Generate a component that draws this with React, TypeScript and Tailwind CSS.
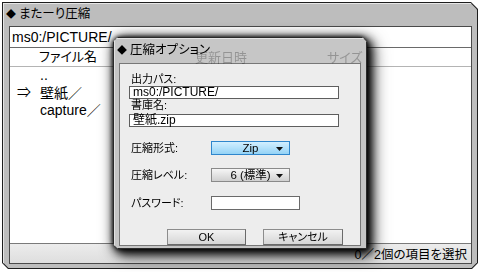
const files = ['..', '壁紙', 'capture'];

function Slash() {
  return <span className="font-['Noto_Sans_CJK_JP',sans-serif] font-medium text-black">／</span>;
}

function Arrow() {
  return (
    <svg className="absolute right-[6px] top-[5px]" width="7" height="4" viewBox="0 0 7 4">
      <polygon points="0,0 7,0 3.5,4" fill="#111" />
    </svg>
  );
}

function Dropdown({ value, active }: { value: string; active?: boolean }) {
  return (
    <div
      className={
        active
          ? 'relative h-[14px] w-[79px] border border-[#2f86cc] bg-linear-to-b from-[#d2efff] to-[#94d3f6] text-center text-[11.5px] leading-[12px]'
          : 'relative h-[14px] w-[79px] border border-[#8a8a8a] bg-linear-to-b from-[#f6f6f6] to-[#d0d0d0] text-center text-[11.5px] leading-[12px]'
      }
    >
      {value}
      <Arrow />
    </div>
  );
}

function Button({ label, width }: { label: string; width: string }) {
  return (
    <div
      className={`h-[16px] ${width} border border-[#8c8c8c] border-r-[#6a6a6a] border-b-[#6a6a6a] bg-linear-to-b from-[#f2f2f2] to-[#d6d6d6] text-center text-[11px] leading-[14px]`}
    >
      {label}
    </div>
  );
}

function OptionsDialog() {
  return (
    <div className="absolute left-[113px] top-[37px] z-10 h-[212px] w-[254px] [filter:drop-shadow(0_0_2px_rgba(0,0,0,0.9))_drop-shadow(3px_3px_4px_rgba(0,0,0,0.95))_drop-shadow(2px_2px_7px_rgba(0,0,0,0.8))]">
      <div className="relative flex h-full w-full flex-col border border-[#2a2a2a] bg-[#c6c6c6] px-[5px] pb-[2px] shadow-[inset_1px_1px_0_#e2e2e2] [clip-path:polygon(5px_0,calc(100%-5px)_0,100%_5px,100%_100%,5px_100%,0_calc(100%-5px),0_5px)]">
        <div className="-ml-[2px] flex h-[25px] items-center gap-[3px] text-[12.5px]">
          <span className="text-[10px]">◆</span>
          <span>圧縮オプション</span>
        </div>
        {/* column titles of the list behind, seen through the title bar */}
        <span className="absolute left-[81px] top-[12px] text-[13px] leading-[15px] text-black/25">更新日時</span>
        <span className="absolute left-[213px] top-[12px] text-[13px] leading-[15px] text-black/25">サイズ</span>
        <div className="flex flex-1 flex-col border border-[#777] bg-[#ededed] pl-[9px] pt-[9px] text-[11px]">
          <div className="h-[13px] pl-[2px] leading-[13px]">出力パス:</div>
          <div className="h-[13px] w-[210px] border border-[#5e5e5e] bg-white px-[3px] text-[12px] leading-[11px]">
            ms0:/PICTURE/
          </div>
          <div className="h-[13px] pl-[2px] leading-[13px]">書庫名:</div>
          <div className="mt-[2px] h-[13px] w-[210px] border border-[#5e5e5e] bg-white px-[3px] text-[12px] leading-[11px]">
            壁紙.zip
          </div>
          <div className="mt-[13px] flex items-center">
            <span className="w-[82px] pl-[2px]">圧縮形式:</span>
            <Dropdown value="Zip" active />
          </div>
          <div className="mt-[10px] flex items-center">
            <span className="w-[82px] pl-[2px]">圧縮レベル:</span>
            <Dropdown value="6 (標準)" />
          </div>
          <div className="mt-[12px] flex items-center">
            <span className="w-[82px] pl-[2px]">パスワード:</span>
            <div className="h-[14px] w-[89px] border border-[#6a6a6a] bg-white" />
          </div>
          <div className="ml-[38px] mt-[17px] flex gap-[17px]">
            <Button label="OK" width="w-[79px]" />
            <Button label="キャンセル" width="w-[80px]" />
          </div>
        </div>
      </div>
    </div>
  );
}

export default function App() {
  return (
    <div className="relative h-[272px] w-[480px] overflow-hidden bg-white font-['Liberation_Sans','Noto_Sans_CJK_JP',sans-serif] text-black [font-feature-settings:'palt']">
      <div className="ml-[2px] mt-[2px] h-[267px] w-[476px] bg-[#1e1e1e] p-px [clip-path:polygon(0_0,calc(100%-7px)_0,100%_7px,100%_calc(100%-6px),calc(100%-6px)_100%,6px_100%,0_calc(100%-6px))]">
        <div className="flex h-full flex-col bg-[#bdbdbd] shadow-[inset_1px_1px_0_#e6e6e6] [clip-path:polygon(0_0,calc(100%-6.5px)_0,100%_6.5px,100%_calc(100%-5.5px),calc(100%-5.5px)_100%,5.5px_100%,0_calc(100%-5.5px))]">
          <div className="flex h-[23px] items-center gap-[3px] pl-[3px] text-[12.5px]">
            <span className="text-[10px]">◆</span>
            <span>またーり圧縮</span>
          </div>
          <div className="mb-[4px] ml-[6px] mr-[5px] flex flex-1 flex-col border border-[#4a4a4a] bg-white">
            <div className="h-[21px] border-b border-[#6a6a6a] pl-[2px] text-[14px] leading-[21px]">
              ms0:/PICTURE/
            </div>
            <div className="flex h-[19px] items-center border-b border-[#b4b4b4] pl-[29px] text-[13px]">
              <span>ファイル名</span>
            </div>
            <div className="flex flex-col text-[14px]">
              {files.map((name, i) => (
                <div key={name} className="flex h-[17px] items-center">
                  <span className="w-[30px] pl-[7px]">{i === 1 ? '⇒' : ''}</span>
                  <span>
                    {name}
                    {i > 0 && <Slash />}
                  </span>
                </div>
              ))}
            </div>
            <div className="flex-1" />
            <div className="h-[20px] border-t border-[#7a7a7a] bg-linear-to-b from-[#ececec] to-[#dedede] pr-[4px] text-right text-[12.5px] leading-[19px]">
              0<Slash />2個の項目を選択
            </div>
          </div>
        </div>
      </div>
      <OptionsDialog />
    </div>
  );
}
